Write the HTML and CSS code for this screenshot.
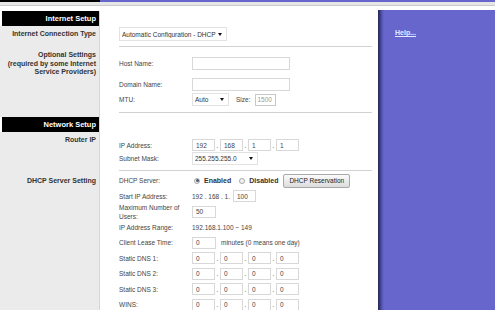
FILE: index.html
```html
<!DOCTYPE html>
<html lang="en">

<head>
  <meta charset="UTF-8">
  <meta name="viewport" content="width=device-width, initial-scale=1.0">
  <title>Setup - Basic Setup</title>
  <link rel="stylesheet" href="styles.css">
</head>

<body>
  <div class="topbar">
    <div class="tb-left"></div>
    <div class="tb-right"></div>
  </div>
  <div class="strip"></div>

  <div class="page">
    <div class="main">
      <!-- Internet Setup -->
      <div class="sec head">
        <div class="side">Internet Setup</div>
        <div class="cnt"></div>
      </div>

      <div class="sec sec-type">
        <div class="side">Internet Connection Type</div>
        <div class="cnt">
          <span class="sel sel-type">
            <select><option>Automatic Configuration - DHCP</option></select>
          </span>
          <div class="rule"></div>
        </div>
      </div>

      <div class="sec sec-opt">
        <div class="side">Optional Settings<br>(required by some Internet<br>Service Providers)</div>
        <div class="cnt">
          <div class="f">
            <span class="fl">Host Name:</span>
            <input type="text" class="box box-name" value="">
          </div>
          <div class="f mt8">
            <span class="fl">Domain Name:</span>
            <input type="text" class="box box-name" value="">
          </div>
          <div class="f mt2">
            <span class="fl">MTU:</span>
            <span class="sel sel-mtu">
              <select><option>Auto</option></select>
            </span>
            <span class="size-label">Size:</span>
            <input type="text" class="box box-size" value="1500" disabled>
          </div>
          <div class="rule mt6"></div>
        </div>
      </div>

      <!-- Network Setup -->
      <div class="sec head">
        <div class="side">Network Setup</div>
        <div class="cnt"></div>
      </div>

      <div class="sec sec-router">
        <div class="side">Router IP</div>
        <div class="cnt">
          <div class="f f-ip">
            <span class="fl">IP Address:</span>
            <input type="text" class="box octet" value="192"><span class="dot">.</span>
            <input type="text" class="box octet" value="168"><span class="dot">.</span>
            <input type="text" class="box octet" value="1"><span class="dot">.</span>
            <input type="text" class="box octet" value="1">
          </div>
          <div class="f mt1">
            <span class="fl">Subnet Mask:</span>
            <span class="sel sel-mask">
              <select><option>255.255.255.0</option></select>
            </span>
          </div>
          <div class="rule mt5"></div>
        </div>
      </div>

      <div class="sec sec-dhcp">
        <div class="side">DHCP Server Setting</div>
        <div class="cnt">
          <div class="f">
            <span class="fl">DHCP Server:</span>
            <span class="radio on"></span><b class="opt">Enabled</b>
            <span class="radio"></span><b class="opt">Disabled</b>
            <button type="button" class="btn">DHCP Reservation</button>
          </div>
          <div class="f">
            <span class="fl">Start IP Address:</span>
            <span>192 . 168 . 1.</span>
            <input type="text" class="box box-start" value="100">
          </div>
          <div class="f">
            <span class="fl fl-two">Maximum Number of<br>Users:</span>
            <input type="text" class="box box-small" value="50">
          </div>
          <div class="f">
            <span class="fl">IP Address Range:</span>
            <span>192.168.1.100 ~ 149</span>
          </div>
          <div class="f">
            <span class="fl">Client Lease Time:</span>
            <input type="text" class="box box-small" value="0">
            <span class="unit">minutes (0 means one day)</span>
          </div>
          <div class="f">
            <span class="fl">Static DNS 1:</span>
            <input type="text" class="box octet" value="0"><span class="dot">.</span>
            <input type="text" class="box octet" value="0"><span class="dot">.</span>
            <input type="text" class="box octet" value="0"><span class="dot">.</span>
            <input type="text" class="box octet" value="0">
          </div>
          <div class="f">
            <span class="fl">Static DNS 2:</span>
            <input type="text" class="box octet" value="0"><span class="dot">.</span>
            <input type="text" class="box octet" value="0"><span class="dot">.</span>
            <input type="text" class="box octet" value="0"><span class="dot">.</span>
            <input type="text" class="box octet" value="0">
          </div>
          <div class="f">
            <span class="fl">Static DNS 3:</span>
            <input type="text" class="box octet" value="0"><span class="dot">.</span>
            <input type="text" class="box octet" value="0"><span class="dot">.</span>
            <input type="text" class="box octet" value="0"><span class="dot">.</span>
            <input type="text" class="box octet" value="0">
          </div>
          <div class="f">
            <span class="fl">WINS:</span>
            <input type="text" class="box octet" value="0"><span class="dot">.</span>
            <input type="text" class="box octet" value="0"><span class="dot">.</span>
            <input type="text" class="box octet" value="0"><span class="dot">.</span>
            <input type="text" class="box octet" value="0">
          </div>
        </div>
      </div>
    </div>

    <!-- help column -->
    <div class="help">
      <a href="#">Help...</a>
    </div>
  </div>
</body>

</html>
```

FILE: styles.css
```css
* {
  box-sizing: border-box;
}

body {
  margin: 0;
  width: 500px;
  height: 310px;
  overflow: hidden;
  background: #fff;
  color: #444;
  font-family: "Liberation Sans", Arial, sans-serif;
  font-size: 6.5px;
}

/* top bar */
.topbar {
  display: flex;
  height: 2px;
  margin-right: 5px;
}

.tb-left {
  width: 100px;
  background: #000;
}

.tb-right {
  flex: 1;
  background: #6666cc;
}

.strip {
  height: 4px;
  margin: 0 5px 4px 0;
  background: #e6e6e6;
  border-bottom: 1px solid #cacaca;
}

.page {
  display: flex;
  height: 300px;
  margin-right: 5px;
}

.main {
  width: 378px;
  padding-top: 1px;
}

/* one row of the form: grey label on the left, white fields on the right */
.sec {
  display: flex;
}

.side {
  width: 100px;
  flex: none;
  padding: 4px 3px 0 0;
  background: #ebebeb;
  border-right: 1px solid #d6d6d6;
  color: #333;
  font-size: 7px;
  font-weight: bold;
  line-height: 8px;
  text-align: right;
  white-space: nowrap;
}

.head .side {
  padding-top: 0;
  background: #000;
  border-left: 2px solid #fff;
  color: #fff;
  font-size: 7.5px;
  line-height: 15px;
}

.cnt {
  flex: 1;
  padding-left: 19px;
}

.rule {
  margin-right: 6px;
  border-top: 1px solid #d2d2d2;
}

.sec-type .cnt {
  padding-top: 1px;
}

.sec-type .rule {
  margin-top: 5px;
}

.sec-opt .side {
  line-height: 8.5px;
}

.sec-opt .cnt {
  padding: 10px 0 4px 19px;
}

.sec-router .cnt {
  padding-top: 7px;
}

.sec-dhcp .side {
  padding-top: 6px;
}

.sec-dhcp .cnt {
  padding-top: 2px;
}

.mt1 { margin-top: 1px; }
.mt2 { margin-top: 2px; }
.mt5 { margin-top: 5px; }
.mt6 { margin-top: 6px; }
.mt8 { margin-top: 8px; }

/* field line */
.f {
  display: flex;
  align-items: center;
  height: 13px;
  white-space: nowrap;
}

.f-ip {
  height: 12px;
}

.sec-dhcp .f {
  height: 15.5px;
}

.fl {
  width: 73px;
  flex: none;
}

.fl-two {
  line-height: 9px;
}

/* inputs */
.box {
  height: 12px;
  padding: 0 3px;
  border: 1px solid #d8d8d8;
  background: #fff;
  color: #444;
  font: inherit;
  outline: none;
}

.box-name {
  width: 98px;
  height: 13px;
}

.box-size {
  width: 21px;
  padding: 0 1px;
  color: #999;
  border-color: #c8c8c8;
}

.size-label {
  margin: 0 5px 0 7px;
}

.octet {
  width: 23px;
}

.dot {
  width: 5px;
  text-align: center;
}

.box-start {
  width: 23px;
  margin-left: 3px;
}

.box-small {
  width: 24px;
}

.unit {
  margin-left: 5px;
}

/* drop downs */
.sel {
  display: inline-flex;
  align-items: center;
  height: 13px;
  background: #fff;
  border: 1px solid #e2e2e2;
}

.sel select {
  flex: 1;
  min-width: 0;
  height: 100%;
  padding: 0 0 0 2px;
  border: 0;
  background: none;
  color: #333;
  font: inherit;
  appearance: none;
  -webkit-appearance: none;
  outline: none;
}

.sel::after {
  content: "";
  margin: 0 4px 0 2px;
  border-left: 2.5px solid transparent;
  border-right: 2.5px solid transparent;
  border-top: 3px solid #111;
}

.sel-type {
  width: 108px;
  height: 14px;
}

.sel-mtu {
  width: 37px;
}

.sel-mask {
  width: 66px;
}

/* radios + button */
.radio {
  display: inline-flex;
  align-items: center;
  justify-content: center;
  width: 6px;
  height: 6px;
  margin: 0 4px 0 2px;
  border: 1px solid #a8a8a8;
  border-radius: 50%;
  background: #f2f2f2;
}

.radio.on::after {
  content: "";
  width: 3px;
  height: 3px;
  border-radius: 50%;
  background: #4a5a78;
}

.opt {
  margin-right: 6px;
  color: #333;
  font-size: 7px;
}

.btn {
  height: 14px;
  margin-left: -1px;
  padding: 0 5px;
  border: 1px solid #a8a8a8;
  border-radius: 2px;
  background: linear-gradient(#fbfbfb, #dcdcdc);
  color: #222;
  font: inherit;
}

/* help column */
.help {
  flex: 1;
  padding: 19px 0 0 17px;
  background: linear-gradient(to right, #262655 0, #3a3a86 2px, #5656b4 4px, #6666cc 6px);
}

.help a {
  color: #e6e6ff;
  font-size: 7px;
  font-weight: bold;
  text-decoration: underline;
}
```
